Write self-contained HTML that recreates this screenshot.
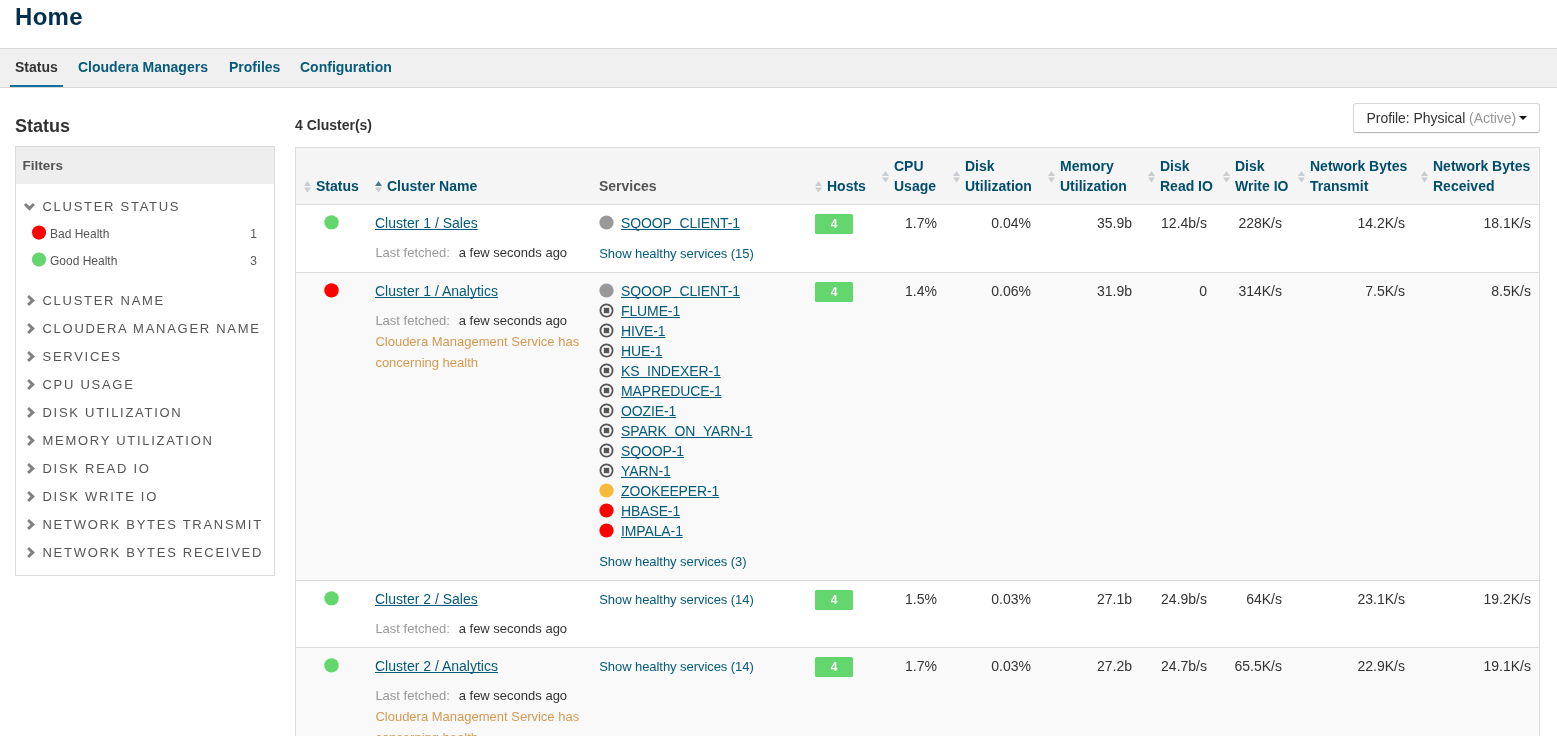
<!DOCTYPE html>
<html><head><meta charset="utf-8"><title>Home</title>
<style>
*{box-sizing:border-box;margin:0;padding:0}
html,body{width:1557px;height:736px;overflow:hidden;background:#fff;font-family:"Liberation Sans",sans-serif;color:#333}
svg{display:block}
#wrap{position:absolute;left:0;top:0;width:1557px;height:736px;will-change:transform}
.u{text-decoration:underline;text-decoration-skip-ink:none}
</style></head><body><div id="wrap">
<div style="position:absolute;left:15px;top:4.68px;font-size:24px;line-height:24px;color:#022f4d;font-weight:bold;letter-spacing:0.3px">Home</div>
<div style="position:absolute;left:0;top:48px;width:1557px;height:40px;background:#f0f0f0;border-top:1px solid #d9d9d9;border-bottom:1px solid #d9d9d9"></div>
<div style="position:absolute;left:10px;top:85px;width:53px;height:2px;background:#1270a0"></div>
<div style="position:absolute;left:15px;top:59.84px;font-size:14px;line-height:14px;color:#333;font-weight:bold;">Status</div>
<div style="position:absolute;left:78px;top:59.84px;font-size:14px;line-height:14px;color:#065a7a;font-weight:bold;">Cloudera Managers</div>
<div style="position:absolute;left:229px;top:59.84px;font-size:14px;line-height:14px;color:#065a7a;font-weight:bold;">Profiles</div>
<div style="position:absolute;left:300px;top:59.84px;font-size:14px;line-height:14px;color:#065a7a;font-weight:bold;">Configuration</div>
<div style="position:absolute;left:15px;top:116.76px;font-size:18px;line-height:18px;color:#333;font-weight:bold;">Status</div>
<div style="position:absolute;left:15px;top:146px;width:260px;height:430px;border:1px solid #dcdcdc;background:#fff"></div>
<div style="position:absolute;left:16px;top:147px;width:258px;height:37px;background:#eeeeee"></div>
<div style="position:absolute;left:22.5px;top:158.57px;font-size:13.5px;line-height:13.5px;color:#555;font-weight:bold;">Filters</div>
<svg style="position:absolute;left:23px;top:202px" width="13" height="10" viewBox="0 0 13 10"><path d="M0.9 3.1 L2.9 1 L6.4 4.3 L9.9 1 L11.9 3.1 L6.4 8.8Z" fill="#808080"/></svg>
<div style="position:absolute;left:42.5px;top:199.99px;font-size:13px;line-height:13px;color:#555;letter-spacing:1.72px">CLUSTER STATUS</div>
<svg style="position:absolute;left:30px;top:223px" width="18" height="18" viewBox="0 0 18 18"><circle cx="9.00" cy="9.60" r="7.10" fill="#f00"/></svg>
<div style="position:absolute;left:50px;top:227.84px;font-size:12px;line-height:12px;color:#555;">Bad Health</div>
<div style="position:absolute;right:1300px;top:227.84px;font-size:12px;line-height:12px;color:#555;white-space:nowrap;">1</div>
<svg style="position:absolute;left:30px;top:250px" width="18" height="18" viewBox="0 0 18 18"><circle cx="9.00" cy="9.60" r="7.10" fill="#63d66e"/></svg>
<div style="position:absolute;left:50px;top:254.84px;font-size:12px;line-height:12px;color:#555;">Good Health</div>
<div style="position:absolute;right:1300px;top:254.84px;font-size:12px;line-height:12px;color:#555;white-space:nowrap;">3</div>
<svg style="position:absolute;left:26px;top:295.0px" width="10" height="12" viewBox="0 0 10 12"><path d="M1.1 2 L3.1 0 L8.9 5.45 L3.1 10.9 L1.1 8.9 L4.5 5.45Z" fill="#808080"/></svg>
<div style="position:absolute;left:42.5px;top:294.39px;font-size:13px;line-height:13px;color:#555;letter-spacing:1.72px">CLUSTER NAME</div>
<svg style="position:absolute;left:26px;top:323.0px" width="10" height="12" viewBox="0 0 10 12"><path d="M1.1 2 L3.1 0 L8.9 5.45 L3.1 10.9 L1.1 8.9 L4.5 5.45Z" fill="#808080"/></svg>
<div style="position:absolute;left:42.5px;top:322.39px;font-size:13px;line-height:13px;color:#555;letter-spacing:1.72px">CLOUDERA MANAGER NAME</div>
<svg style="position:absolute;left:26px;top:351.0px" width="10" height="12" viewBox="0 0 10 12"><path d="M1.1 2 L3.1 0 L8.9 5.45 L3.1 10.9 L1.1 8.9 L4.5 5.45Z" fill="#808080"/></svg>
<div style="position:absolute;left:42.5px;top:350.39px;font-size:13px;line-height:13px;color:#555;letter-spacing:1.72px">SERVICES</div>
<svg style="position:absolute;left:26px;top:379.0px" width="10" height="12" viewBox="0 0 10 12"><path d="M1.1 2 L3.1 0 L8.9 5.45 L3.1 10.9 L1.1 8.9 L4.5 5.45Z" fill="#808080"/></svg>
<div style="position:absolute;left:42.5px;top:378.39px;font-size:13px;line-height:13px;color:#555;letter-spacing:1.72px">CPU USAGE</div>
<svg style="position:absolute;left:26px;top:407.0px" width="10" height="12" viewBox="0 0 10 12"><path d="M1.1 2 L3.1 0 L8.9 5.45 L3.1 10.9 L1.1 8.9 L4.5 5.45Z" fill="#808080"/></svg>
<div style="position:absolute;left:42.5px;top:406.39px;font-size:13px;line-height:13px;color:#555;letter-spacing:1.72px">DISK UTILIZATION</div>
<svg style="position:absolute;left:26px;top:435.0px" width="10" height="12" viewBox="0 0 10 12"><path d="M1.1 2 L3.1 0 L8.9 5.45 L3.1 10.9 L1.1 8.9 L4.5 5.45Z" fill="#808080"/></svg>
<div style="position:absolute;left:42.5px;top:434.39px;font-size:13px;line-height:13px;color:#555;letter-spacing:1.72px">MEMORY UTILIZATION</div>
<svg style="position:absolute;left:26px;top:463.0px" width="10" height="12" viewBox="0 0 10 12"><path d="M1.1 2 L3.1 0 L8.9 5.45 L3.1 10.9 L1.1 8.9 L4.5 5.45Z" fill="#808080"/></svg>
<div style="position:absolute;left:42.5px;top:462.39px;font-size:13px;line-height:13px;color:#555;letter-spacing:1.72px">DISK READ IO</div>
<svg style="position:absolute;left:26px;top:491.0px" width="10" height="12" viewBox="0 0 10 12"><path d="M1.1 2 L3.1 0 L8.9 5.45 L3.1 10.9 L1.1 8.9 L4.5 5.45Z" fill="#808080"/></svg>
<div style="position:absolute;left:42.5px;top:490.39px;font-size:13px;line-height:13px;color:#555;letter-spacing:1.72px">DISK WRITE IO</div>
<svg style="position:absolute;left:26px;top:519.0px" width="10" height="12" viewBox="0 0 10 12"><path d="M1.1 2 L3.1 0 L8.9 5.45 L3.1 10.9 L1.1 8.9 L4.5 5.45Z" fill="#808080"/></svg>
<div style="position:absolute;left:42.5px;top:518.39px;font-size:13px;line-height:13px;color:#555;letter-spacing:1.72px">NETWORK BYTES TRANSMIT</div>
<svg style="position:absolute;left:26px;top:547.0px" width="10" height="12" viewBox="0 0 10 12"><path d="M1.1 2 L3.1 0 L8.9 5.45 L3.1 10.9 L1.1 8.9 L4.5 5.45Z" fill="#808080"/></svg>
<div style="position:absolute;left:42.5px;top:546.39px;font-size:13px;line-height:13px;color:#555;letter-spacing:1.72px">NETWORK BYTES RECEIVED</div>
<div style="position:absolute;left:295px;top:117.84px;font-size:14px;line-height:14px;color:#333;font-weight:bold;">4 Cluster(s)</div>
<div style="position:absolute;left:1353px;top:103px;width:187px;height:30px;border:1px solid #d6d6d6;border-bottom-color:#bbb;border-radius:3px;background:#fff;box-shadow:0 1px 1px rgba(0,0,0,.06)"></div>
<div style="position:absolute;left:1366.5px;top:111.04px;font-size:14px;line-height:14px;color:#333;letter-spacing:-0.05px;white-space:nowrap">Profile: Physical <span style="color:#999">(Active)</span></div>
<svg style="position:absolute;left:1519px;top:116px" width="8" height="4" viewBox="0 0 8 4"><path d="M0 0 L8 0 L4 4Z" fill="#111"/></svg>
<div style="position:absolute;left:295px;top:147px;width:1245px;height:600px;border:1px solid #dcdcdc;border-bottom:none"></div>
<div style="position:absolute;left:296px;top:148px;width:1243px;height:57px;background:#f5f5f5;border-bottom:1px solid #dcdcdc"></div>
<div style="position:absolute;left:296px;top:205px;width:1243px;height:68px;background:#fff;border-bottom:1px solid #dcdcdc"></div>
<div style="position:absolute;left:296px;top:273px;width:1243px;height:308px;background:#f9f9f9;border-bottom:1px solid #dcdcdc"></div>
<div style="position:absolute;left:296px;top:581px;width:1243px;height:67px;background:#fff;border-bottom:1px solid #dcdcdc"></div>
<div style="position:absolute;left:296px;top:648px;width:1243px;height:113px;background:#f9f9f9;border-bottom:1px solid #dcdcdc"></div>
<svg style="position:absolute;left:304px;top:180.5px" width="7" height="12" viewBox="0 0 7 12"><path d="M3.5 0 L7 5 L0 5Z" fill="#c9cdd1"/><path d="M0 6.6 L7 6.6 L3.5 11.6Z" fill="#c9cdd1"/></svg>
<div style="position:absolute;left:316px;top:179.14px;font-size:14px;line-height:14px;color:#004d6c;font-weight:bold;white-space:nowrap">Status</div>
<svg style="position:absolute;left:375px;top:180.5px" width="7" height="12" viewBox="0 0 7 12"><path d="M3.5 0 L7 5 L0 5Z" fill="#4f7690"/><path d="M0 6.6 L7 6.6 L3.5 11.6Z" fill="#c9cdd1"/></svg>
<div style="position:absolute;left:387px;top:179.14px;font-size:14px;line-height:14px;color:#004d6c;font-weight:bold;white-space:nowrap">Cluster Name</div>
<div style="position:absolute;left:599px;top:179.14px;font-size:14px;line-height:14px;color:#555;font-weight:bold;white-space:nowrap">Services</div>
<svg style="position:absolute;left:815px;top:180.5px" width="7" height="12" viewBox="0 0 7 12"><path d="M3.5 0 L7 5 L0 5Z" fill="#c9cdd1"/><path d="M0 6.6 L7 6.6 L3.5 11.6Z" fill="#c9cdd1"/></svg>
<div style="position:absolute;left:827px;top:179.14px;font-size:14px;line-height:14px;color:#004d6c;font-weight:bold;white-space:nowrap">Hosts</div>
<svg style="position:absolute;left:882px;top:170.5px" width="7" height="12" viewBox="0 0 7 12"><path d="M3.5 0 L7 5 L0 5Z" fill="#c9cdd1"/><path d="M0 6.6 L7 6.6 L3.5 11.6Z" fill="#c9cdd1"/></svg>
<div style="position:absolute;left:894px;top:159.14px;font-size:14px;line-height:14px;color:#004d6c;font-weight:bold;white-space:nowrap">CPU</div>
<div style="position:absolute;left:894px;top:179.14px;font-size:14px;line-height:14px;color:#004d6c;font-weight:bold;white-space:nowrap">Usage</div>
<svg style="position:absolute;left:953px;top:170.5px" width="7" height="12" viewBox="0 0 7 12"><path d="M3.5 0 L7 5 L0 5Z" fill="#c9cdd1"/><path d="M0 6.6 L7 6.6 L3.5 11.6Z" fill="#c9cdd1"/></svg>
<div style="position:absolute;left:965px;top:159.14px;font-size:14px;line-height:14px;color:#004d6c;font-weight:bold;white-space:nowrap">Disk</div>
<div style="position:absolute;left:965px;top:179.14px;font-size:14px;line-height:14px;color:#004d6c;font-weight:bold;white-space:nowrap">Utilization</div>
<svg style="position:absolute;left:1048px;top:170.5px" width="7" height="12" viewBox="0 0 7 12"><path d="M3.5 0 L7 5 L0 5Z" fill="#c9cdd1"/><path d="M0 6.6 L7 6.6 L3.5 11.6Z" fill="#c9cdd1"/></svg>
<div style="position:absolute;left:1060px;top:159.14px;font-size:14px;line-height:14px;color:#004d6c;font-weight:bold;white-space:nowrap">Memory</div>
<div style="position:absolute;left:1060px;top:179.14px;font-size:14px;line-height:14px;color:#004d6c;font-weight:bold;white-space:nowrap">Utilization</div>
<svg style="position:absolute;left:1148px;top:170.5px" width="7" height="12" viewBox="0 0 7 12"><path d="M3.5 0 L7 5 L0 5Z" fill="#c9cdd1"/><path d="M0 6.6 L7 6.6 L3.5 11.6Z" fill="#c9cdd1"/></svg>
<div style="position:absolute;left:1160px;top:159.14px;font-size:14px;line-height:14px;color:#004d6c;font-weight:bold;white-space:nowrap">Disk</div>
<div style="position:absolute;left:1160px;top:179.14px;font-size:14px;line-height:14px;color:#004d6c;font-weight:bold;white-space:nowrap">Read IO</div>
<svg style="position:absolute;left:1223px;top:170.5px" width="7" height="12" viewBox="0 0 7 12"><path d="M3.5 0 L7 5 L0 5Z" fill="#c9cdd1"/><path d="M0 6.6 L7 6.6 L3.5 11.6Z" fill="#c9cdd1"/></svg>
<div style="position:absolute;left:1235px;top:159.14px;font-size:14px;line-height:14px;color:#004d6c;font-weight:bold;white-space:nowrap">Disk</div>
<div style="position:absolute;left:1235px;top:179.14px;font-size:14px;line-height:14px;color:#004d6c;font-weight:bold;white-space:nowrap">Write IO</div>
<svg style="position:absolute;left:1298px;top:170.5px" width="7" height="12" viewBox="0 0 7 12"><path d="M3.5 0 L7 5 L0 5Z" fill="#c9cdd1"/><path d="M0 6.6 L7 6.6 L3.5 11.6Z" fill="#c9cdd1"/></svg>
<div style="position:absolute;left:1310px;top:159.14px;font-size:14px;line-height:14px;color:#004d6c;font-weight:bold;white-space:nowrap">Network Bytes</div>
<div style="position:absolute;left:1310px;top:179.14px;font-size:14px;line-height:14px;color:#004d6c;font-weight:bold;white-space:nowrap">Transmit</div>
<svg style="position:absolute;left:1421px;top:170.5px" width="7" height="12" viewBox="0 0 7 12"><path d="M3.5 0 L7 5 L0 5Z" fill="#c9cdd1"/><path d="M0 6.6 L7 6.6 L3.5 11.6Z" fill="#c9cdd1"/></svg>
<div style="position:absolute;left:1433px;top:159.14px;font-size:14px;line-height:14px;color:#004d6c;font-weight:bold;white-space:nowrap">Network Bytes</div>
<div style="position:absolute;left:1433px;top:179.14px;font-size:14px;line-height:14px;color:#004d6c;font-weight:bold;white-space:nowrap">Received</div>
<svg style="position:absolute;left:322px;top:213px" width="18" height="18" viewBox="0 0 18 18"><circle cx="9.50" cy="9.40" r="7.20" fill="#63d66e"/></svg>
<div style="position:absolute;left:375px;top:216.14px;font-size:14px;line-height:14px;color:#045a7a;white-space:nowrap"><span class="u">Cluster 1 / Sales</span></div>
<div style="position:absolute;left:375.4px;top:245.99px;font-size:13px;line-height:13px;color:#999;white-space:nowrap">Last fetched:</div>
<div style="position:absolute;left:458.7px;top:245.99px;font-size:13px;line-height:13px;color:#333;white-space:nowrap">a few seconds ago</div>
<svg style="position:absolute;left:597px;top:213px" width="18" height="18" viewBox="0 0 18 18"><circle cx="9.50" cy="9.50" r="7.10" fill="#999"/></svg>
<div style="position:absolute;left:621px;top:216.14px;font-size:14px;line-height:14px;color:#045a7a;white-space:nowrap;letter-spacing:-0.12px"><span class="u">SQOOP<span style="position:relative;top:-1.5px">_</span>CLIENT-1</span></div>
<div style="position:absolute;left:599.2px;top:246.99px;font-size:13px;line-height:13px;color:#045a7a;white-space:nowrap;letter-spacing:-0.06px">Show healthy services (15)</div>
<div style="position:absolute;left:815px;top:214px;width:38px;height:20px;border-radius:1.5px;background:#63d66e;color:#fff;font-size:12px;font-weight:bold;line-height:20px;text-align:center">4</div>
<div style="position:absolute;right:620px;top:216.14px;font-size:14px;line-height:14px;color:#333;white-space:nowrap;">1.7%</div>
<div style="position:absolute;right:526px;top:216.14px;font-size:14px;line-height:14px;color:#333;white-space:nowrap;">0.04%</div>
<div style="position:absolute;right:425px;top:216.14px;font-size:14px;line-height:14px;color:#333;white-space:nowrap;">35.9b</div>
<div style="position:absolute;right:350px;top:216.14px;font-size:14px;line-height:14px;color:#333;white-space:nowrap;">12.4b/s</div>
<div style="position:absolute;right:275px;top:216.14px;font-size:14px;line-height:14px;color:#333;white-space:nowrap;">228K/s</div>
<div style="position:absolute;right:152px;top:216.14px;font-size:14px;line-height:14px;color:#333;white-space:nowrap;">14.2K/s</div>
<div style="position:absolute;right:26px;top:216.14px;font-size:14px;line-height:14px;color:#333;white-space:nowrap;">18.1K/s</div>
<svg style="position:absolute;left:322px;top:281px" width="18" height="18" viewBox="0 0 18 18"><circle cx="9.50" cy="9.40" r="7.20" fill="#f00"/></svg>
<div style="position:absolute;left:375px;top:284.14px;font-size:14px;line-height:14px;color:#045a7a;white-space:nowrap"><span class="u">Cluster 1 / Analytics</span></div>
<div style="position:absolute;left:375.4px;top:313.99px;font-size:13px;line-height:13px;color:#999;white-space:nowrap">Last fetched:</div>
<div style="position:absolute;left:458.7px;top:313.99px;font-size:13px;line-height:13px;color:#333;white-space:nowrap">a few seconds ago</div>
<div style="position:absolute;left:375.4px;top:334.99px;font-size:13px;line-height:13px;color:#d59a52;white-space:nowrap">Cloudera Management Service has</div>
<div style="position:absolute;left:375.4px;top:355.99px;font-size:13px;line-height:13px;color:#d59a52;white-space:nowrap">concerning health</div>
<svg style="position:absolute;left:597px;top:281px" width="18" height="18" viewBox="0 0 18 18"><circle cx="9.50" cy="9.50" r="7.10" fill="#999"/></svg>
<div style="position:absolute;left:621px;top:284.14px;font-size:14px;line-height:14px;color:#045a7a;white-space:nowrap;letter-spacing:-0.12px"><span class="u">SQOOP<span style="position:relative;top:-1.5px">_</span>CLIENT-1</span></div>
<svg style="position:absolute;left:597px;top:301px" width="18" height="18" viewBox="0 0 18 18"><circle cx="9.50" cy="9.50" r="6.1" fill="none" stroke="#555" stroke-width="1.8"/><rect x="6.80" y="6.80" width="5.4" height="5.4" fill="#555"/></svg>
<div style="position:absolute;left:621px;top:304.14px;font-size:14px;line-height:14px;color:#045a7a;white-space:nowrap;letter-spacing:-0.12px"><span class="u">FLUME-1</span></div>
<svg style="position:absolute;left:597px;top:321px" width="18" height="18" viewBox="0 0 18 18"><circle cx="9.50" cy="9.50" r="6.1" fill="none" stroke="#555" stroke-width="1.8"/><rect x="6.80" y="6.80" width="5.4" height="5.4" fill="#555"/></svg>
<div style="position:absolute;left:621px;top:324.14px;font-size:14px;line-height:14px;color:#045a7a;white-space:nowrap;letter-spacing:-0.12px"><span class="u">HIVE-1</span></div>
<svg style="position:absolute;left:597px;top:341px" width="18" height="18" viewBox="0 0 18 18"><circle cx="9.50" cy="9.50" r="6.1" fill="none" stroke="#555" stroke-width="1.8"/><rect x="6.80" y="6.80" width="5.4" height="5.4" fill="#555"/></svg>
<div style="position:absolute;left:621px;top:344.14px;font-size:14px;line-height:14px;color:#045a7a;white-space:nowrap;letter-spacing:-0.12px"><span class="u">HUE-1</span></div>
<svg style="position:absolute;left:597px;top:361px" width="18" height="18" viewBox="0 0 18 18"><circle cx="9.50" cy="9.50" r="6.1" fill="none" stroke="#555" stroke-width="1.8"/><rect x="6.80" y="6.80" width="5.4" height="5.4" fill="#555"/></svg>
<div style="position:absolute;left:621px;top:364.14px;font-size:14px;line-height:14px;color:#045a7a;white-space:nowrap;letter-spacing:-0.12px"><span class="u">KS<span style="position:relative;top:-1.5px">_</span>INDEXER-1</span></div>
<svg style="position:absolute;left:597px;top:381px" width="18" height="18" viewBox="0 0 18 18"><circle cx="9.50" cy="9.50" r="6.1" fill="none" stroke="#555" stroke-width="1.8"/><rect x="6.80" y="6.80" width="5.4" height="5.4" fill="#555"/></svg>
<div style="position:absolute;left:621px;top:384.14px;font-size:14px;line-height:14px;color:#045a7a;white-space:nowrap;letter-spacing:-0.12px"><span class="u">MAPREDUCE-1</span></div>
<svg style="position:absolute;left:597px;top:401px" width="18" height="18" viewBox="0 0 18 18"><circle cx="9.50" cy="9.50" r="6.1" fill="none" stroke="#555" stroke-width="1.8"/><rect x="6.80" y="6.80" width="5.4" height="5.4" fill="#555"/></svg>
<div style="position:absolute;left:621px;top:404.14px;font-size:14px;line-height:14px;color:#045a7a;white-space:nowrap;letter-spacing:-0.12px"><span class="u">OOZIE-1</span></div>
<svg style="position:absolute;left:597px;top:421px" width="18" height="18" viewBox="0 0 18 18"><circle cx="9.50" cy="9.50" r="6.1" fill="none" stroke="#555" stroke-width="1.8"/><rect x="6.80" y="6.80" width="5.4" height="5.4" fill="#555"/></svg>
<div style="position:absolute;left:621px;top:424.14px;font-size:14px;line-height:14px;color:#045a7a;white-space:nowrap;letter-spacing:-0.12px"><span class="u">SPARK<span style="position:relative;top:-1.5px">_</span>ON<span style="position:relative;top:-1.5px">_</span>YARN-1</span></div>
<svg style="position:absolute;left:597px;top:441px" width="18" height="18" viewBox="0 0 18 18"><circle cx="9.50" cy="9.50" r="6.1" fill="none" stroke="#555" stroke-width="1.8"/><rect x="6.80" y="6.80" width="5.4" height="5.4" fill="#555"/></svg>
<div style="position:absolute;left:621px;top:444.14px;font-size:14px;line-height:14px;color:#045a7a;white-space:nowrap;letter-spacing:-0.12px"><span class="u">SQOOP-1</span></div>
<svg style="position:absolute;left:597px;top:461px" width="18" height="18" viewBox="0 0 18 18"><circle cx="9.50" cy="9.50" r="6.1" fill="none" stroke="#555" stroke-width="1.8"/><rect x="6.80" y="6.80" width="5.4" height="5.4" fill="#555"/></svg>
<div style="position:absolute;left:621px;top:464.14px;font-size:14px;line-height:14px;color:#045a7a;white-space:nowrap;letter-spacing:-0.12px"><span class="u">YARN-1</span></div>
<svg style="position:absolute;left:597px;top:481px" width="18" height="18" viewBox="0 0 18 18"><circle cx="9.50" cy="9.50" r="7.10" fill="#f8b83a"/></svg>
<div style="position:absolute;left:621px;top:484.14px;font-size:14px;line-height:14px;color:#045a7a;white-space:nowrap;letter-spacing:-0.12px"><span class="u">ZOOKEEPER-1</span></div>
<svg style="position:absolute;left:597px;top:501px" width="18" height="18" viewBox="0 0 18 18"><circle cx="9.50" cy="9.50" r="7.10" fill="#f00"/></svg>
<div style="position:absolute;left:621px;top:504.14px;font-size:14px;line-height:14px;color:#045a7a;white-space:nowrap;letter-spacing:-0.12px"><span class="u">HBASE-1</span></div>
<svg style="position:absolute;left:597px;top:521px" width="18" height="18" viewBox="0 0 18 18"><circle cx="9.50" cy="9.50" r="7.10" fill="#f00"/></svg>
<div style="position:absolute;left:621px;top:524.14px;font-size:14px;line-height:14px;color:#045a7a;white-space:nowrap;letter-spacing:-0.12px"><span class="u">IMPALA-1</span></div>
<div style="position:absolute;left:599.2px;top:554.99px;font-size:13px;line-height:13px;color:#045a7a;white-space:nowrap;letter-spacing:-0.06px">Show healthy services (3)</div>
<div style="position:absolute;left:815px;top:282px;width:38px;height:20px;border-radius:1.5px;background:#63d66e;color:#fff;font-size:12px;font-weight:bold;line-height:20px;text-align:center">4</div>
<div style="position:absolute;right:620px;top:284.14px;font-size:14px;line-height:14px;color:#333;white-space:nowrap;">1.4%</div>
<div style="position:absolute;right:526px;top:284.14px;font-size:14px;line-height:14px;color:#333;white-space:nowrap;">0.06%</div>
<div style="position:absolute;right:425px;top:284.14px;font-size:14px;line-height:14px;color:#333;white-space:nowrap;">31.9b</div>
<div style="position:absolute;right:350px;top:284.14px;font-size:14px;line-height:14px;color:#333;white-space:nowrap;">0</div>
<div style="position:absolute;right:275px;top:284.14px;font-size:14px;line-height:14px;color:#333;white-space:nowrap;">314K/s</div>
<div style="position:absolute;right:152px;top:284.14px;font-size:14px;line-height:14px;color:#333;white-space:nowrap;">7.5K/s</div>
<div style="position:absolute;right:26px;top:284.14px;font-size:14px;line-height:14px;color:#333;white-space:nowrap;">8.5K/s</div>
<svg style="position:absolute;left:322px;top:589px" width="18" height="18" viewBox="0 0 18 18"><circle cx="9.50" cy="9.40" r="7.20" fill="#63d66e"/></svg>
<div style="position:absolute;left:375px;top:592.14px;font-size:14px;line-height:14px;color:#045a7a;white-space:nowrap"><span class="u">Cluster 2 / Sales</span></div>
<div style="position:absolute;left:375.4px;top:621.99px;font-size:13px;line-height:13px;color:#999;white-space:nowrap">Last fetched:</div>
<div style="position:absolute;left:458.7px;top:621.99px;font-size:13px;line-height:13px;color:#333;white-space:nowrap">a few seconds ago</div>
<div style="position:absolute;left:599.2px;top:592.99px;font-size:13px;line-height:13px;color:#045a7a;white-space:nowrap;letter-spacing:-0.06px">Show healthy services (14)</div>
<div style="position:absolute;left:815px;top:590px;width:38px;height:20px;border-radius:1.5px;background:#63d66e;color:#fff;font-size:12px;font-weight:bold;line-height:20px;text-align:center">4</div>
<div style="position:absolute;right:620px;top:592.14px;font-size:14px;line-height:14px;color:#333;white-space:nowrap;">1.5%</div>
<div style="position:absolute;right:526px;top:592.14px;font-size:14px;line-height:14px;color:#333;white-space:nowrap;">0.03%</div>
<div style="position:absolute;right:425px;top:592.14px;font-size:14px;line-height:14px;color:#333;white-space:nowrap;">27.1b</div>
<div style="position:absolute;right:350px;top:592.14px;font-size:14px;line-height:14px;color:#333;white-space:nowrap;">24.9b/s</div>
<div style="position:absolute;right:275px;top:592.14px;font-size:14px;line-height:14px;color:#333;white-space:nowrap;">64K/s</div>
<div style="position:absolute;right:152px;top:592.14px;font-size:14px;line-height:14px;color:#333;white-space:nowrap;">23.1K/s</div>
<div style="position:absolute;right:26px;top:592.14px;font-size:14px;line-height:14px;color:#333;white-space:nowrap;">19.2K/s</div>
<svg style="position:absolute;left:322px;top:656px" width="18" height="18" viewBox="0 0 18 18"><circle cx="9.50" cy="9.40" r="7.20" fill="#63d66e"/></svg>
<div style="position:absolute;left:375px;top:659.14px;font-size:14px;line-height:14px;color:#045a7a;white-space:nowrap"><span class="u">Cluster 2 / Analytics</span></div>
<div style="position:absolute;left:375.4px;top:688.99px;font-size:13px;line-height:13px;color:#999;white-space:nowrap">Last fetched:</div>
<div style="position:absolute;left:458.7px;top:688.99px;font-size:13px;line-height:13px;color:#333;white-space:nowrap">a few seconds ago</div>
<div style="position:absolute;left:375.4px;top:709.99px;font-size:13px;line-height:13px;color:#d59a52;white-space:nowrap">Cloudera Management Service has</div>
<div style="position:absolute;left:375.4px;top:730.99px;font-size:13px;line-height:13px;color:#d59a52;white-space:nowrap">concerning health</div>
<div style="position:absolute;left:599.2px;top:659.99px;font-size:13px;line-height:13px;color:#045a7a;white-space:nowrap;letter-spacing:-0.06px">Show healthy services (14)</div>
<div style="position:absolute;left:815px;top:657px;width:38px;height:20px;border-radius:1.5px;background:#63d66e;color:#fff;font-size:12px;font-weight:bold;line-height:20px;text-align:center">4</div>
<div style="position:absolute;right:620px;top:659.14px;font-size:14px;line-height:14px;color:#333;white-space:nowrap;">1.7%</div>
<div style="position:absolute;right:526px;top:659.14px;font-size:14px;line-height:14px;color:#333;white-space:nowrap;">0.03%</div>
<div style="position:absolute;right:425px;top:659.14px;font-size:14px;line-height:14px;color:#333;white-space:nowrap;">27.2b</div>
<div style="position:absolute;right:350px;top:659.14px;font-size:14px;line-height:14px;color:#333;white-space:nowrap;">24.7b/s</div>
<div style="position:absolute;right:275px;top:659.14px;font-size:14px;line-height:14px;color:#333;white-space:nowrap;">65.5K/s</div>
<div style="position:absolute;right:152px;top:659.14px;font-size:14px;line-height:14px;color:#333;white-space:nowrap;">22.9K/s</div>
<div style="position:absolute;right:26px;top:659.14px;font-size:14px;line-height:14px;color:#333;white-space:nowrap;">19.1K/s</div>
</div></body></html>
